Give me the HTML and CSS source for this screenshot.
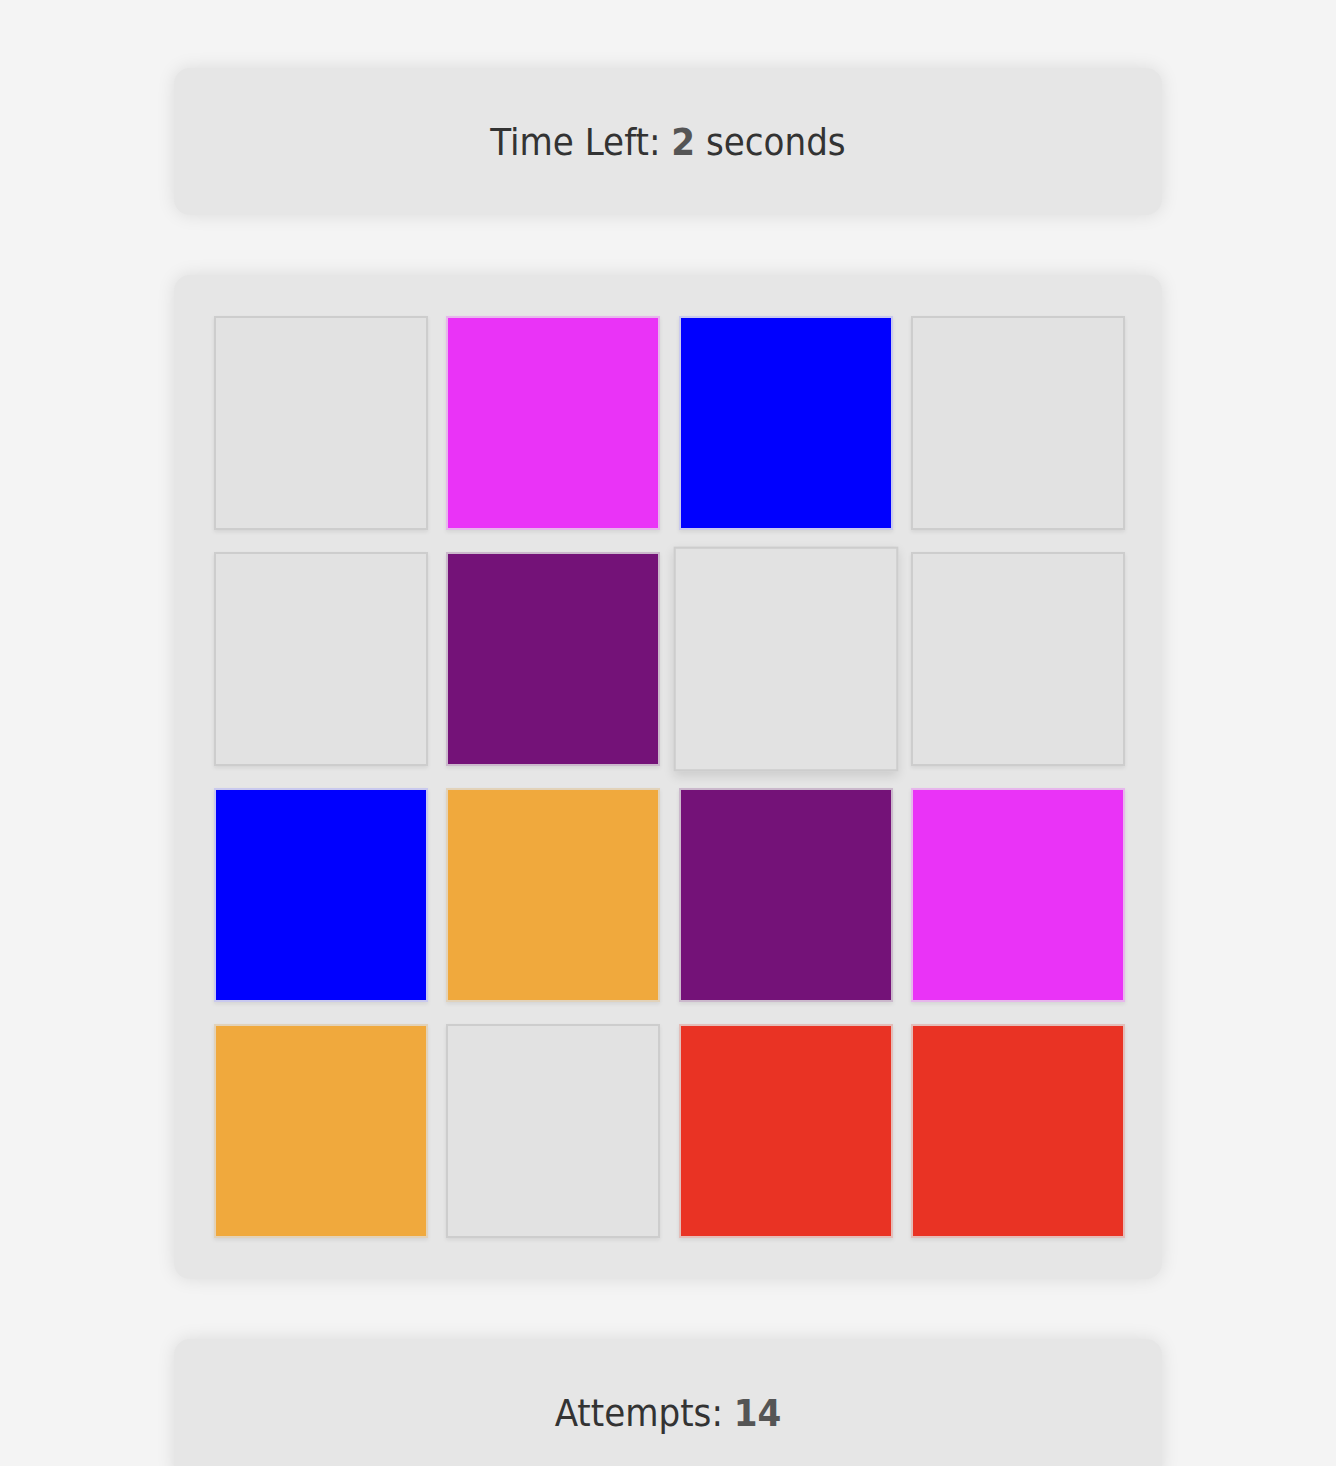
FILE: index.html
```html
<!DOCTYPE html>
<html lang="en">
<head>
<meta charset="utf-8">
<title>Memory Game</title>
<link rel="stylesheet" href="styles.css">
</head>
<body>
<div class="game">
  <div class="panel info">Time Left: <b class="value">2</b> seconds</div>
  <div class="panel board">
    <div class="grid">
      <div class="tile"></div>
      <div class="tile c-magenta"></div>
      <div class="tile c-blue"></div>
      <div class="tile"></div>
      <div class="tile"></div>
      <div class="tile c-purple"></div>
      <div class="tile hovered"></div>
      <div class="tile"></div>
      <div class="tile c-blue"></div>
      <div class="tile c-orange"></div>
      <div class="tile c-purple"></div>
      <div class="tile c-magenta"></div>
      <div class="tile c-orange"></div>
      <div class="tile"></div>
      <div class="tile c-red"></div>
      <div class="tile c-red"></div>
    </div>
  </div>
  <div class="panel info">Attempts: <b class="value">14</b></div>
</div>
</body>
</html>
```

FILE: styles.css
```css
html, body {
  margin: 0;
  padding: 0;
  background: #f4f4f4;
}
body {
  font-family: "DejaVu Sans Condensed", "DejaVu Sans", sans-serif;
  color: #333;
}
.game {
  width: 988px;
  margin: 0 auto;
  padding-top: 68px;
  display: flex;
  flex-direction: column;
  gap: 60px;
}
.panel {
  background: #e6e6e6;
  border-radius: 16px;
  box-shadow: 0 0 18px rgba(0, 0, 0, 0.1);
}
.info {
  height: 147px;
  display: flex;
  align-items: center;
  justify-content: center;
  font-size: 38px;
  white-space: pre;
  padding-top: 1px;
  box-sizing: border-box;
}
.value {
  color: #555;
  font-weight: bold;
}
.board {
  padding: 41px 34px 41px 40px;
}
.grid {
  display: grid;
  grid-template-columns: repeat(4, 214px);
  grid-auto-rows: 214px;
  column-gap: 18.4px;
  row-gap: 22px;
}
.tile {
  box-sizing: border-box;
  background: #e2e2e2;
  border: 2px solid #cdcdcd;
  box-shadow: 0 2px 4px rgba(0, 0, 0, 0.08);
}
.hovered {
  transform: scale(1.05);
  box-shadow: 0 4px 10px rgba(0, 0, 0, 0.12);
}
.c-magenta { background: #ea33f7; border-color: #e7b5ec; }
.c-blue { background: #0000ff; border-color: #c9c9ef; }
.c-purple { background: #741278; border-color: #cbb8cc; }
.c-orange { background: #f0a93d; border-color: #e2d2b9; }
.c-red { background: #e93324; border-color: #e4bdb9; }
```
